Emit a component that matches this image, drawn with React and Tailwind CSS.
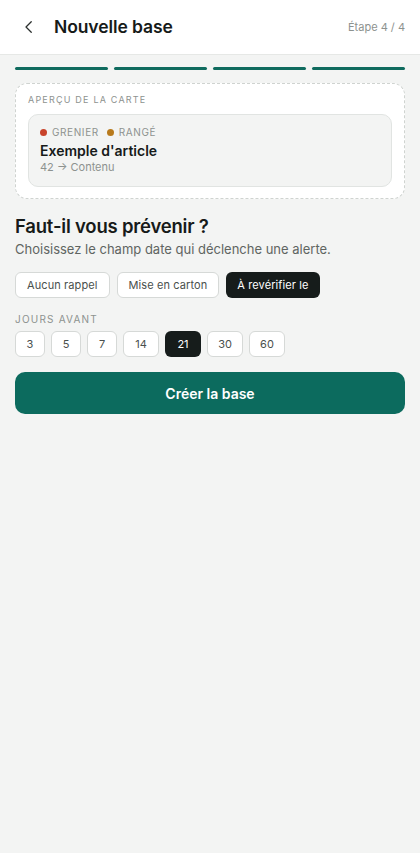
import React from "react";

export default function App() {
  const days = ["3", "5", "7", "14", "21", "30", "60"];
  return (
    <div className="min-h-[853px] bg-[#f3f4f3] font-['Inter',sans-serif] text-[#161a19]">
      <div className="h-[55px] bg-white border-b border-[#e6e8e6] flex items-center pl-[20px] pr-[15px]">
        <svg width="18" height="18" viewBox="0 0 24 24" fill="none" stroke="#2a2f2d" strokeWidth="1.7" strokeLinecap="round" strokeLinejoin="round">
          <path d="M15 5l-7 7 7 7" />
        </svg>
        <div className="ml-[16px] text-[17.5px] font-semibold tracking-[-0.1px]">Nouvelle base</div>
        <div className="ml-auto text-[11px] text-[#8d928f]">Étape 4 / 4</div>
      </div>
      <div className="px-[15px]">
        <div className="mt-[12px] grid grid-cols-4 gap-[6px]">
          <div className="h-[3px] rounded-full bg-[#0f6b5e]" />
          <div className="h-[3px] rounded-full bg-[#0f6b5e]" />
          <div className="h-[3px] rounded-full bg-[#0f6b5e]" />
          <div className="h-[3px] rounded-full bg-[#0f6b5e]" />
        </div>
        <div className="mt-[13px] rounded-[12px] border border-dashed border-[#cfd3d0] bg-white px-[12px] pt-[9px] pb-[11px]">
          <div className="text-[9px] tracking-[1.2px] text-[#8d928f] leading-[14px]">APERÇU DE LA CARTE</div>
          <div className="mt-[7px] rounded-[10px] border border-[#e1e4e2] bg-[#f3f4f3] px-[11px] pt-[10px] pb-[11px]">
            <div className="flex items-center gap-[8px] text-[10px] tracking-[0.6px] text-[#8d928f] leading-[14px]">
              <span className="flex items-center gap-[5px]"><span className="w-[7px] h-[7px] rounded-full bg-[#c8432b]" />GRENIER</span>
              <span className="flex items-center gap-[5px]"><span className="w-[7px] h-[7px] rounded-full bg-[#b87a1c]" />RANGÉ</span>
            </div>
            <div className="mt-[2px] text-[14px] font-semibold leading-[19px]">Exemple d'article</div>
            <div className="text-[11px] text-[#8d928f] leading-[15px]">42 → Contenu</div>
          </div>
        </div>
        <div className="mt-[15px] text-[18.5px] font-semibold leading-[24px] tracking-[-0.2px]">Faut-il vous prévenir ?</div>
        <div className="mt-[2px] text-[13px] text-[#5f6562] leading-[18px]">Choisissez le champ date qui déclenche une alerte.</div>
        <div className="mt-[14px] flex gap-[7px]">
          <div className="h-[26px] px-[11px] flex items-center rounded-[6px] border border-[#d6d9d7] bg-white text-[11px] tracking-[0.1px] text-[#4a504d]">Aucun rappel</div>
          <div className="h-[26px] px-[11px] flex items-center rounded-[6px] border border-[#d6d9d7] bg-white text-[11px] tracking-[0.1px] text-[#4a504d]">Mise en carton</div>
          <div className="h-[26px] px-[11px] flex items-center rounded-[6px] bg-[#161c1b] text-[11px] tracking-[0.1px] text-white">À revérifier le</div>
        </div>
        <div className="mt-[14px] text-[10px] tracking-[1.2px] text-[#8d928f] leading-[14px]">JOURS AVANT</div>
        <div className="mt-[5px] flex gap-[6px]">
          {days.map((d) => {
            const w = d.length === 1 ? "w-[30px]" : "w-[36px]";
            return d === "21" ? (
              <div key={d} className={`h-[26px] ${w} flex items-center justify-center rounded-[6px] bg-[#161c1b] text-[11px] text-white`}>{d}</div>
            ) : (
              <div key={d} className={`h-[26px] ${w} flex items-center justify-center rounded-[6px] border border-[#d6d9d7] bg-white text-[11px] text-[#4a504d]`}>{d}</div>
            );
          })}
        </div>
        <div className="mt-[15px] h-[42px] rounded-[10px] bg-[#0c6b5e] flex items-center justify-center text-white text-[14px] font-semibold">Créer la base</div>
      </div>
    </div>
  );
}
